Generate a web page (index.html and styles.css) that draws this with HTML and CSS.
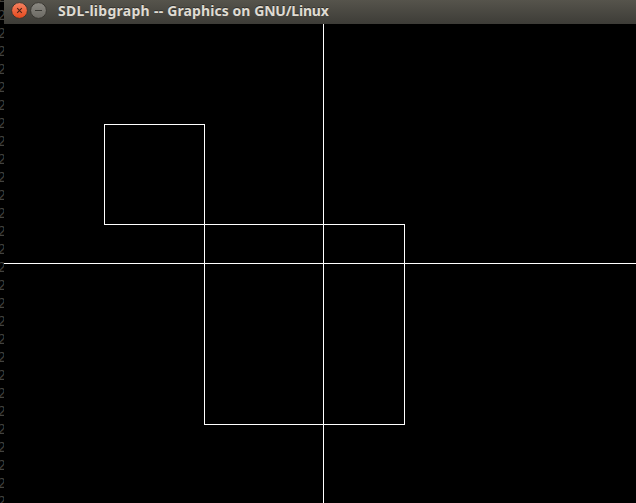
FILE: index.html
```html
<!DOCTYPE html>
<html lang="en">
<head>
<meta charset="utf-8">
<title>SDL-libgraph -- Graphics on GNU/Linux</title>
<link rel="stylesheet" href="styles.css">
</head>
<body>
<div class="desktop">
<div class="gutter"><div class="digits">2<br>2<br>2<br>2<br>2<br>2<br>2<br>2<br>2<br>2<br>2<br>2<br>2<br>2<br>2<br>2<br>2<br>2<br>2<br>2<br>2<br>2<br>2<br>2<br>2<br>2<br>2<br>2<br>2</div></div>
<main class="window">
<header class="titlebar">
<svg class="controls" width="46" height="24" viewBox="4 0 46 24" aria-hidden="true">
<defs>
<linearGradient id="close" x1="0" y1="0" x2="0" y2="1"><stop offset="0" stop-color="#f58362"/><stop offset="1" stop-color="#e5481c"/></linearGradient>
<linearGradient id="min" x1="0" y1="0" x2="0" y2="1"><stop offset="0" stop-color="#8c8a83"/><stop offset="1" stop-color="#6b6963"/></linearGradient>
</defs>
<circle cx="19.5" cy="10.5" r="7.9" fill="url(#close)" stroke="#35332e" stroke-width=".9"/>
<path d="M17.2 8.2l4.6 4.6M21.8 8.2l-4.6 4.6" stroke="#4a2218" stroke-width="1.1"/>
<circle cx="38.5" cy="10.5" r="7.9" fill="url(#min)" stroke="#35332e" stroke-width=".9"/>
<path d="M35 10.5h7" stroke="#3b3a35"/>
</svg>
<h1 class="title"><span class="name">SDL-libgraph -- </span>Graphics on <span class="platform">GNU/Linux</span></h1>
</header>
<svg class="canvas" width="632" height="479" viewBox="0 0 632 479" shape-rendering="crispEdges">
<path d="M319.5 0V479M0 239.5H632"/>
<rect x="100.5" y="100.5" width="100" height="100"/>
<rect x="200.5" y="200.5" width="200" height="200"/>
</svg>
</main>
</div>
</body>
</html>
```
FILE: styles.css
```css
body {
  margin: 0;
  background: #000;
}

.desktop {
  display: flex;
  width: 636px;
  height: 503px;
  overflow: hidden;
}

.gutter {
  width: 4px;
  flex: none;
  overflow: hidden;
}

.digits {
  margin: -12px 0 0 -2px;
  font: 13.5px/18px "Noto Sans", sans-serif;
  color: #42423e;
}

.window {
  width: 632px;
}

.titlebar {
  display: flex;
  height: 24px;
  background: linear-gradient(#56544c, #3d3c37);
}

.controls {
  flex: none;
}

.title {
  margin: 0 0 0 8px;
  font: bold 14px/22px "Noto Sans", sans-serif;
  letter-spacing: 0.07px;
  color: #dfdbd2;
  white-space: nowrap;
  text-shadow: 0 -1px #33322e;
}

.name {
  letter-spacing: 0.28px;
}

.platform {
  letter-spacing: -0.2px;
}

.canvas {
  display: block;
  fill: none;
  stroke: #fff;
}
```
